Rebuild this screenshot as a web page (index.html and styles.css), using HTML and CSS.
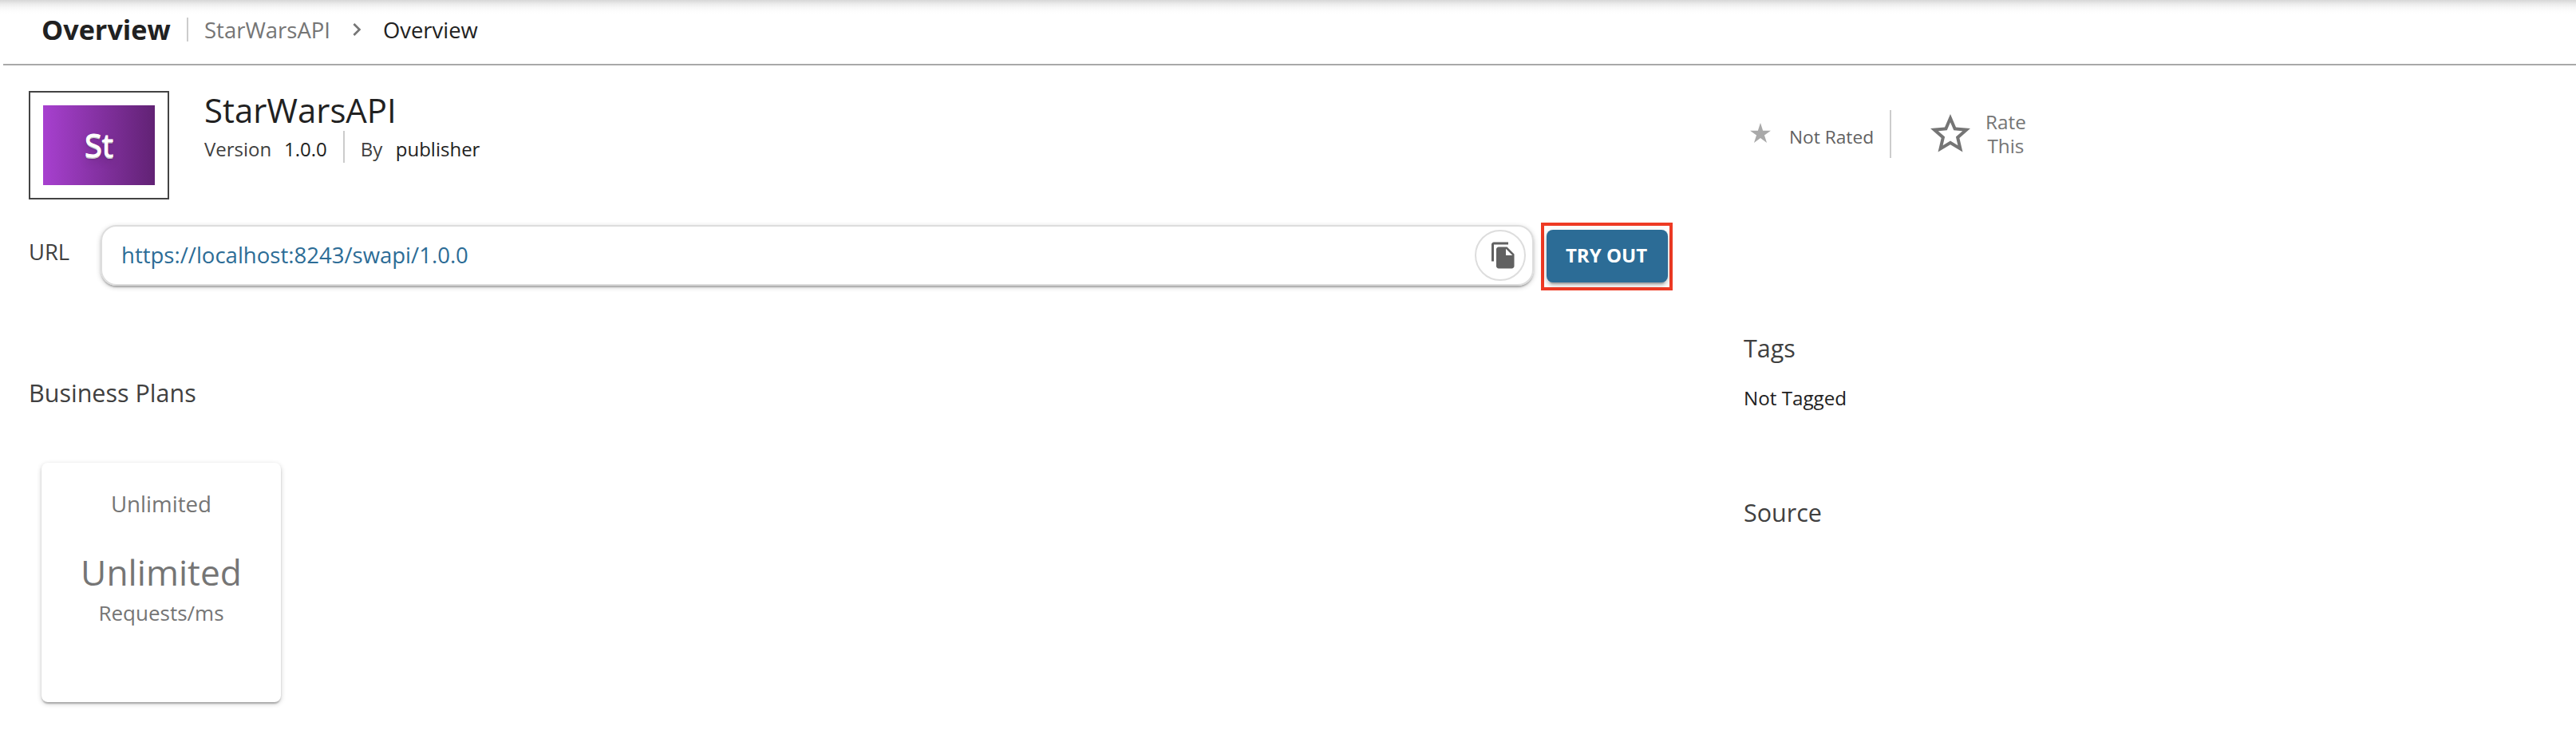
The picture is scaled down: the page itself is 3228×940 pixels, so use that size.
FILE: index.html
```
<!DOCTYPE html>
<html lang="en">
<head>
<meta charset="utf-8">
<title>StarWarsAPI - Overview</title>
<link rel="stylesheet" href="styles.css">
</head>
<body>
<div class="appbar-shadow"></div>
<header class="header">
  <h1 class="header-title">Overview</h1>
  <span class="header-divider"></span>
  <a class="crumb">StarWarsAPI</a>
  <svg class="chevron" viewBox="0 0 24 24"><path d="M10 6L8.590 7.410 13.170 12l-4.580 4.590L10 18l6-6z"/></svg>
  <span class="crumb-current">Overview</span>
</header>
<main class="content">
  <section class="left">
    <div class="api-info">
      <div class="thumb"><div class="thumb-inner"><span class="thumb-text">St</span></div></div>
      <div class="api-text">
        <h2 class="api-name">StarWarsAPI</h2>
        <div class="meta">
          <span class="meta-label version">Version</span>
          <span class="meta-value">1.0.0</span>
          <span class="meta-divider"></span>
          <span class="meta-label by">By</span>
          <span class="meta-value">publisher</span>
        </div>
      </div>
    </div>
    <div class="url-row">
      <span class="url-label">URL</span>
      <div class="url-box">
        <span class="url">https://localhost:8243/swapi/1.0.0</span>
        <span class="copy"><svg class="copy-icon" viewBox="0 0 24 24"><path d="M16 1H4c-1.100 0-2 .9-2 2v14h2V3h12V1zm-1 4l6 6v10c0 1.100-.9 2-2 2H7.990C6.890 23 6 22.100 6 21l.01-14c0-1.100.89-2 1.990-2h7zm-1 7h5.500L14 6.500V12z"/></svg></span>
      </div>
      <div class="highlight"><button class="try">TRY OUT</button></div>
    </div>
    <h3 class="plans-title">Business Plans</h3>
    <div class="plan">
      <span class="plan-name">Unlimited</span>
      <span class="plan-quota">Unlimited</span>
      <span class="plan-unit">Requests/ms</span>
    </div>
  </section>
  <aside class="right">
    <div class="rating">
      <svg class="star-small" viewBox="6 5.500 12 11.500"><path d="M12 14.300l3.710 2.700-1.420-4.360L18 10h-4.550L12 5.500 10.550 10H6l3.710 2.640L8.290 17z"/></svg>
      <span class="not-rated">Not Rated</span>
      <span class="rating-divider"></span>
      <svg class="star-big" viewBox="0 0 24 24"><path d="M22 9.240l-7.190-.62L12 2 9.190 8.630 2 9.240l5.460 4.730L5.820 21 12 17.270 18.180 21l-1.630-7.030L22 9.240zM12 15.400l-3.760 2.270 1-4.280-3.320-2.880 4.380-.38L12 6.100l1.710 4.040 4.380.38-3.320 2.880 1 4.280L12 15.400z"/></svg>
      <span class="rate-this">Rate<br>This</span>
    </div>
    <h3 class="side-title">Tags</h3>
    <p class="not-tagged">Not Tagged</p>
    <h3 class="side-title source">Source</h3>
  </aside>
</main>
</body>
</html>
```
FILE: styles.css
```
* { box-sizing: border-box; }
body {
  margin: 0;
  width: 3228px;
  height: 940px;
  overflow: hidden;
  background: #fff;
  color: #212121;
  font-family: "Open Sans", sans-serif;
}
h1, h2, h3, p { margin: 0; font-weight: 400; }
span, a, h1, h2, h3 { white-space: nowrap; }

/* Shadow cast by the app bar above the page */
.appbar-shadow {
  position: absolute;
  top: 0;
  left: 0;
  right: 0;
  height: 17px;
  background: linear-gradient(#d6d6d6, #dfdfdf 2px, #ececec 5px, #f6f6f6 9px, #fcfcfc 13px, #fff);
}

.header {
  position: relative;
  display: flex;
  align-items: flex-start;
  height: 82px;
  margin-left: 4px;
  padding-left: 48px;
  border-bottom: 2px solid #a9a9a9;
}
.header-title { width: 182px; margin-top: 16px; font-size: 34.2px; line-height: 42px; font-weight: 700; }
.header-divider { width: 2px; height: 30px; margin: 22px 20px 0 0; background: #ccc; }
.crumb { width: 175px; margin-top: 18px; font-size: 27.5px; line-height: 40px; color: #757575; }
.chevron { width: 32px; height: 32px; margin: 21px 17px 0 0; fill: #757575; }
.crumb-current { margin-top: 18px; font-size: 27.4px; line-height: 40px; }

.content { display: grid; grid-template-columns: 2149px 1fr; padding-left: 36px; }

.api-info { display: flex; padding-top: 32px; }
.thumb { width: 176px; height: 136px; padding: 16px; border: 2px solid #444; }
.thumb-inner {
  display: flex;
  align-items: center;
  justify-content: center;
  height: 100px;
  background: linear-gradient(90deg, #a740cf, #612274);
}
.thumb-text { color: #fff; font-size: 40px; line-height: 54px; text-shadow: 0 1px 0 #ccc, 0 2px 0 #c9c9c9, 0 3px 2px rgba(0,0,0,.15), 0 6px 12px rgba(0,0,0,.2); -webkit-text-stroke: 1px #fff; }
.api-text { margin-left: 44px; }
.api-name { margin-top: -4px; height: 54px; font-size: 41.9px; line-height: 56px; }
.meta { display: flex; font-size: 24px; line-height: 36px; }
.meta-label { margin-top: 5px; color: #404040; }
.version { width: 100px; }
.meta-value { margin-top: 5px; }
.meta-divider { width: 2px; height: 40px; margin: 0 20px 0 20px; background: #ccc; }
.by { width: 44px; }

.url-row { display: flex; margin-top: 29px; }
.url-label { width: 90px; margin-top: 17px; font-size: 27.4px; line-height: 40px; color: #404040; }
.url-box {
  display: flex;
  align-items: center;
  justify-content: space-between;
  width: 1796px;
  height: 76px;
  margin-top: 3px;
  padding: 0 8px 0 24px;
  border: 2px solid #ddd;
  border-radius: 20px;
  box-shadow: 0 2px 6px rgba(0,0,0,.2), 0 2px 2px rgba(0,0,0,.14), 0 4px 2px -2px rgba(0,0,0,.12);
}
.url { font-size: 27.54px; line-height: 40px; color: #2c6c96; }
.copy { display: flex; align-items: center; width: 64px; height: 64px; padding-left: 16px; border: 2px solid #ddd; border-radius: 50%; }
.copy-icon { width: 36px; height: 36px; fill: #616161; }
.highlight { width: 165px; height: 85px; margin-left: 9px; padding: 5px 3px; border: 4px solid #ee3a24; }
.try {
  display: block;
  width: 152px;
  height: 66px;
  padding: 0 2px 2px 0;
  border: 0;
  border-radius: 8px;
  background: #2c6c96;
  color: #fff;
  font: 700 24px/64px "Open Sans", sans-serif;
  box-shadow: 0 6px 2px -4px rgba(0,0,0,.2), 0 4px 4px rgba(0,0,0,.14), 0 2px 10px rgba(0,0,0,.12);
}

.plans-title { margin-top: 106px; font-size: 30.5px; line-height: 44px; color: #404040; }
.plan {
  display: flex;
  flex-direction: column;
  align-items: center;
  width: 300px;
  height: 300px;
  margin: 66px 0 0 16px;
  border-radius: 8px;
  color: #757575;
  box-shadow: 0 2px 6px rgba(0,0,0,.2), 0 2px 2px rgba(0,0,0,.14), 0 4px 2px -2px rgba(0,0,0,.12);
}
.plan-name { margin-top: 31px; font-size: 27.7px; line-height: 40px; }
.plan-quota { margin-top: 36px; font-size: 44.3px; line-height: 60px; }
.plan-unit { margin-top: 3px; font-size: 26px; line-height: 36px; }

.rating { display: flex; height: 118px; padding-top: 56px; }
.star-small { width: 26px; height: 25px; margin: 16px 0 0 8px; fill: #a9a9a9; }
.not-rated { width: 126px; margin: 16px 0 0 23px; font-size: 22.7px; line-height: 36px; color: #616161; }
.rating-divider { width: 2px; height: 60px; background: #ccc; }
.star-big { width: 60px; height: 60px; margin: 0 14px 0 44px; fill: #757575; }
.rate-this { font-size: 24.3px; line-height: 30px; text-align: center; color: #757575; }
.side-title { margin-top: 214px; font-size: 30.5px; line-height: 44px; color: #404040; }
.not-tagged { margin-top: 23px; font-size: 24.2px; line-height: 36px; }
.source { margin-top: 103px; }
```
